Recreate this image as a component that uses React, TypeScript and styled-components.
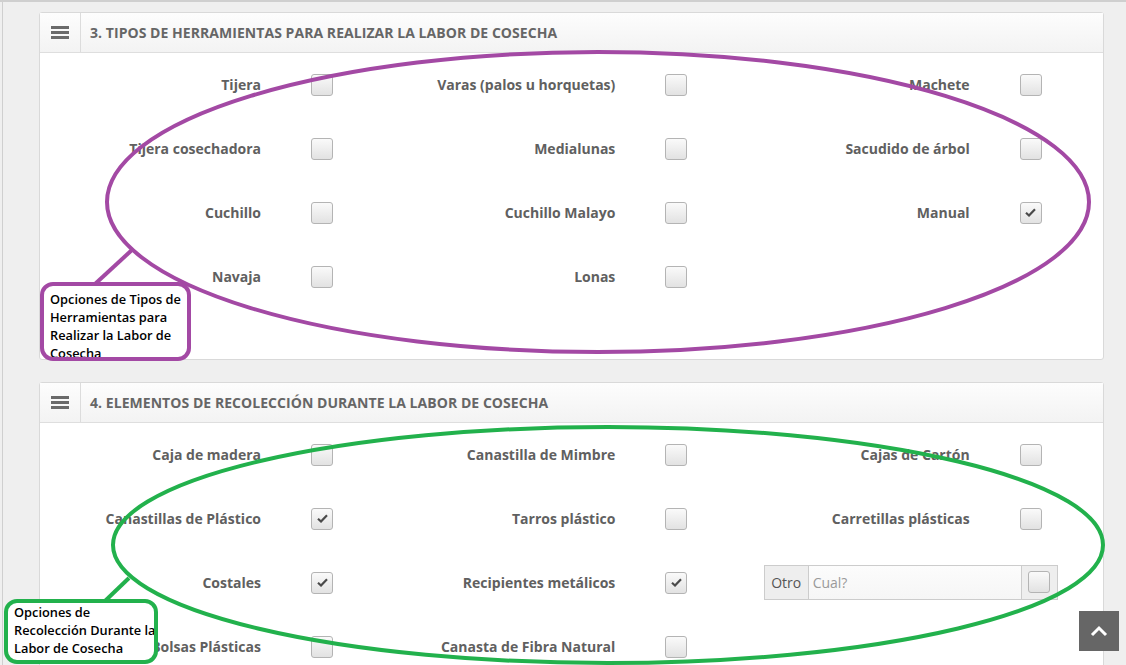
import React from "react";
import styled, { createGlobalStyle } from "styled-components";

const Global = createGlobalStyle`
  html, body { margin: 0; padding: 0; height: 665px; overflow: hidden; }
  body { background: #eeeeee; font-family: "Open Sans", "Liberation Sans", sans-serif; }
`;

const Frame = styled.div`
  position: relative;
  width: 1126px;
  height: 665px;
  overflow: hidden;
  box-sizing: border-box;
  border-top: 2px solid #cfcfcf;
  padding: 10px 0 0 39px;
  background: #efefef;
  &::before {
    content: "";
    position: absolute;
    left: 2px;
    top: 0;
    bottom: 0;
    width: 1px;
    background: #cfcfcf;
  }
`;

const Stack = styled.div`
  display: flex;
  flex-direction: column;
  gap: 22px;
  width: 1065px;
`;

const Panel = styled.section`
  background: #fff;
  border: 1px solid #d9d9d9;
  border-radius: 3px;
  box-sizing: border-box;
`;

const Header = styled.header`
  display: flex;
  align-items: stretch;
  height: 40px;
  box-sizing: border-box;
  border-bottom: 1px solid #dedede;
  background: linear-gradient(#fdfdfd, #f3f3f3);
`;

const IconCell = styled.div`
  width: 40px;
  border-right: 1px solid #dcdcdc;
  display: flex;
  align-items: center;
  justify-content: center;
`;

const Title = styled.h2`
  margin: 0;
  padding-left: 9px;
  display: flex;
  align-items: center;
  font-size: 14px;
  font-weight: 700;
  color: #666;
  letter-spacing: 0.05px;
`;

const Body = styled.div`
  display: grid;
  grid-template-columns: repeat(3, 1fr);
  grid-auto-rows: 64px;
  padding: 0 0 50px;
`;

const Field = styled.div`
  display: grid;
  grid-template-columns: 221px 50px 22px;
  align-items: center;
  margin-top: -2px;
`;

const Label = styled.label`
  grid-column: 1;
  text-align: right;
  font-size: 14px;
  font-weight: 700;
  color: #606060;
  white-space: nowrap;
`;

const Box = styled.span`
  grid-column: 3;
  width: 22px;
  height: 22px;
  box-sizing: border-box;
  border: 1px solid #b4b4b4;
  border-radius: 3px;
  background: linear-gradient(#fafafa, #e2e2e2);
  display: flex;
  align-items: center;
  justify-content: center;
  margin-top: 1px;
`;

const OtherGroup = styled.div`
  display: flex;
  align-items: stretch;
  margin-left: 15px;
  width: 294px;
  height: 35px;
  box-sizing: border-box;
  border: 1px solid #cccccc;
`;

const Addon = styled.span<{ $w: number }>`
  width: ${(p) => p.$w}px;
  background: #eeeeee;
  display: flex;
  align-items: center;
  justify-content: center;
  font-size: 14px;
  color: #555;
  box-sizing: border-box;
`;

const TextInput = styled.input`
  flex: 1;
  border: none;
  border-left: 1px solid #cccccc;
  border-right: 1px solid #cccccc;
  padding: 0 4px;
  font-family: "Open Sans", "Liberation Sans", sans-serif;
  font-size: 14px;
  color: #555;
  background: linear-gradient(#fcfcfc, #f6f6f6);
  outline: none;
  &::placeholder { color: #9a9a9a; }
`;

const Overlay = styled.svg`
  position: absolute;
  left: 0;
  top: 0;
  pointer-events: none;
`;

const Callout = styled.div<{ $c: string; $x: number; $y: number; $w: number; $h: number; $pt: number }>`
  position: absolute;
  left: ${(p) => p.$x}px;
  top: ${(p) => p.$y}px;
  width: ${(p) => p.$w}px;
  height: ${(p) => p.$h}px;
  box-sizing: border-box;
  border: 4px solid ${(p) => p.$c};
  border-radius: 13px;
  background: #fff;
  padding: ${(p) => p.$pt}px 0 0 6px;
  font-family: "Open Sans", "Liberation Sans", sans-serif;
  font-size: 12.8px;
  font-weight: 600;
  line-height: 18px;
  color: #000;
  overflow: hidden;
  white-space: nowrap;
`;

const TopButton = styled.button`
  position: absolute;
  left: 1079px;
  top: 609px;
  width: 40px;
  height: 40px;
  border: none;
  padding: 0;
  background: #666666;
  display: flex;
  align-items: center;
  justify-content: center;
`;

const Bars = () => (
  <svg width="18" height="14" viewBox="0 0 18 14">
    <rect x="0" y="0" width="18" height="3" fill="#6a6a6a" />
    <rect x="0" y="5" width="18" height="3" fill="#6a6a6a" />
    <rect x="0" y="10" width="18" height="3" fill="#6a6a6a" />
  </svg>
);

const Check = () => (
  <svg width="11" height="9" viewBox="0 0 11 9">
    <path d="M1 4.8 L4 7.5 L10 1.2" fill="none" stroke="#4a4a4a" strokeWidth="2.2" />
  </svg>
);

type Item = { label: string; checked?: boolean; other?: boolean } | null;

const CheckField = ({ item }: { item: Item }) => {
  if (!item) return <div />;
  if (item.other)
    return (
      <Field style={{ display: "flex" }}>
        <OtherGroup>
          <Addon $w={43}>Otro</Addon>
          <TextInput placeholder="Cual?" />
          <Addon $w={35}>
            <Box style={{ marginTop: 0 }} />
          </Addon>
        </OtherGroup>
      </Field>
    );
  return (
    <Field>
      <Label>{item.label}</Label>
      <Box>{item.checked && <Check />}</Box>
    </Field>
  );
};

const tools: Item[] = [
  { label: "Tijera" },
  { label: "Varas (palos u horquetas)" },
  { label: "Machete" },
  { label: "Tijera cosechadora" },
  { label: "Medialunas" },
  { label: "Sacudido de árbol" },
  { label: "Cuchillo" },
  { label: "Cuchillo Malayo" },
  { label: "Manual", checked: true },
  { label: "Navaja" },
  { label: "Lonas" },
  null,
];

const elements: Item[] = [
  { label: "Caja de madera" },
  { label: "Canastilla de Mimbre" },
  { label: "Cajas de Cartón" },
  { label: "Canastillas de Plástico", checked: true },
  { label: "Tarros plástico" },
  { label: "Carretillas plásticas" },
  { label: "Costales", checked: true },
  { label: "Recipientes metálicos", checked: true },
  { label: "", other: true },
  { label: "Bolsas Plásticas" },
  { label: "Canasta de Fibra Natural" },
  null,
];

const Section = ({ title, items }: { title: string; items: Item[] }) => (
  <Panel>
    <Header>
      <IconCell>
        <Bars />
      </IconCell>
      <Title>{title}</Title>
    </Header>
    <Body>
      {items.map((it, i) => (
        <CheckField key={i} item={it} />
      ))}
    </Body>
  </Panel>
);

export default function App() {
  return (
    <>
      <Global />
      <Frame>
        <Stack>
          <Section title="3. TIPOS DE HERRAMIENTAS PARA REALIZAR LA LABOR DE COSECHA" items={tools} />
          <Section title="4. ELEMENTOS DE RECOLECCIÓN DURANTE LA LABOR DE COSECHA" items={elements} />
        </Stack>
        <Overlay width="1126" height="665" viewBox="0 0 1126 665">
          <ellipse cx="598" cy="200" rx="491" ry="150" fill="none" stroke="#a349a4" strokeWidth="4" />
          <line x1="133" y1="247" x2="95" y2="282" stroke="#a349a4" strokeWidth="4" />
          <ellipse cx="608" cy="543" rx="495" ry="118" fill="none" stroke="#22b14c" strokeWidth="4" />
          <line x1="129" y1="576" x2="105" y2="599" stroke="#22b14c" strokeWidth="4" />
        </Overlay>
        <Callout $c="#a349a4" $x={40} $y={280} $w={151} $h={79} $pt={4}>
          Opciones de Tipos de
          <br />
          Herramientas para
          <br />
          Realizar la Labor de
          <br />
          Cosecha
        </Callout>
        <Callout $c="#22b14c" $x={4} $y={597} $w={154} $h={65} $pt={0}>
          Opciones de
          <br />
          Recolección Durante la
          <br />
          Labor de Cosecha
        </Callout>
        <TopButton aria-label="Subir">
          <svg width="18" height="12" viewBox="0 0 18 12">
            <path d="M2 10 L9 3 L16 10" fill="none" stroke="#fff" strokeWidth="3" />
          </svg>
        </TopButton>
      </Frame>
    </>
  );
}
